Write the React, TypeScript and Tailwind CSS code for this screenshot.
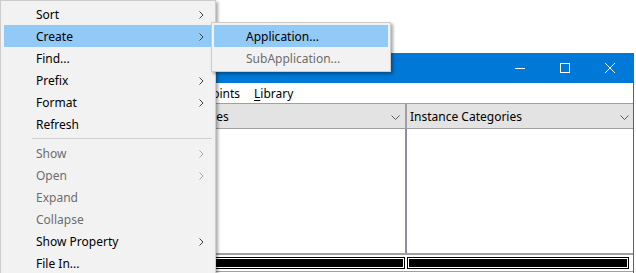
import React from "react";

type Item = { label: string; sub?: boolean; disabled?: boolean; active?: boolean } | "sep";

const mainItems: Item[] = [
  { label: "Sort", sub: true },
  { label: "Create", sub: true, active: true },
  { label: "Find..." },
  { label: "Prefix", sub: true },
  { label: "Format", sub: true },
  { label: "Refresh" },
  "sep",
  { label: "Show", sub: true, disabled: true },
  { label: "Open", sub: true, disabled: true },
  { label: "Expand", disabled: true },
  { label: "Collapse", disabled: true },
  { label: "Show Property", sub: true },
  { label: "File In..." },
];

function Arrow({ disabled }: { disabled?: boolean }) {
  return (
    <svg width="5" height="8" viewBox="0 0 5 8">
      <path d="M0.5 0.5L4 4L0.5 7.5" fill="none" stroke={disabled ? "#a6a6a6" : "#404040"} strokeWidth="1" />
    </svg>
  );
}

function Caret() {
  return (
    <svg width="9" height="5" viewBox="0 0 9 5">
      <path d="M0.5 0.5L4.5 4.5L8.5 0.5" fill="none" stroke="#5a5a5a" strokeWidth="1" />
    </svg>
  );
}

function MenuRow({ item }: { item: Exclude<Item, "sep"> }) {
  return (
    <div
      className={`flex h-[22px] items-center justify-between pl-[32px] pr-[8px] pt-px ${
        item.active ? "bg-[#91c9f7]" : ""
      } ${item.disabled ? "text-[#6d6d6d]" : "text-black"}`}
    >
      <span>{item.label}</span>
      {item.sub && <Arrow disabled={item.disabled} />}
    </div>
  );
}

function Bar({ className }: { className: string }) {
  return (
    <div className={`bg-black p-px ${className}`}>
      <div className="h-full border border-white bg-black" />
    </div>
  );
}

export default function App() {
  return (
    <div className="relative h-[273px] w-[636px] overflow-hidden bg-white font-['Segoe_UI','Noto_Sans',sans-serif] text-[12px]">
      {/* browser window behind the menus */}
      <div className="ml-[132px] mt-[53px] w-[502px] border-x border-[#0078d7]">
        <div className="flex h-[30px] justify-end bg-[#0078d7]">
          <div className="flex w-[46px] items-center justify-center pl-[4px]">
            <svg width="10" height="10" viewBox="0 0 10 10">
              <path d="M0 5.5H10" stroke="white" strokeWidth="1" />
            </svg>
          </div>
          <div className="flex w-[46px] items-center justify-center pl-[2px]">
            <svg width="10" height="10" viewBox="0 0 10 10">
              <rect x="0.5" y="0.5" width="9" height="9" fill="none" stroke="white" strokeWidth="1" />
            </svg>
          </div>
          <div className="flex w-[46px] items-center justify-center">
            <svg width="10" height="10" viewBox="0 0 10 10">
              <path d="M0 0L10 10M10 0L0 10" stroke="white" strokeWidth="1" />
            </svg>
          </div>
        </div>

        <div className="flex h-[20px] items-center bg-white pt-px">
          <div className="flex flex-1 justify-end overflow-hidden whitespace-nowrap">
            <span className="px-[7px]">File</span>
            <span className="px-[7px]">Edit</span>
            <span className="px-[7px]">Breakpoints</span>
          </div>
          <div className="w-[386px] pl-[7px]">
            <span className="underline underline-offset-2">L</span>ibrary
          </div>
        </div>

        <div className="flex h-[26px] border-y border-[#a0a0a0] bg-[#e3e3e3]">
          <div className="flex flex-1 items-center justify-between pl-[3px] pr-[5px] pt-[2px]">
            <span>Class Categories</span>
            <Caret />
          </div>
          <div className="w-[2px] bg-[#a0a0a0]" />
          <div className="flex w-[226px] items-center justify-between pl-[3px] pr-[4px] pt-[2px]">
            <span>Instance Categories</span>
            <Caret />
          </div>
        </div>

        <div className="flex h-[124px] bg-white">
          <div className="flex-1" />
          <div className="w-[2px] bg-[#8a8f99]" />
          <div className="w-[226px]" />
        </div>
        <div className="h-[2px] bg-[#a0a0a0]" />

        <div className="flex h-[16px] gap-[2px] py-[2px] pr-[4px]">
          <Bar className="flex-1" />
          <Bar className="w-[222px]" />
        </div>
        <div className="h-[1px] bg-[#a0a0a0]" />
        <div className="h-[10px] bg-white" />
      </div>

      {/* context menu */}
      <div className="absolute left-0 top-0 w-[216px] border border-[#cccccc] bg-[#f2f2f2] px-[3px] pb-[2px] pt-[2px] shadow-[2px_2px_3px_rgba(0,0,0,0.35)]">
        {mainItems.map((item, i) =>
          item === "sep" ? (
            <div key={i} className="flex h-[7px] items-center pl-[28px]">
              <div className="h-px w-full bg-[#d0d0d0]" />
            </div>
          ) : (
            <MenuRow key={i} item={item} />
          )
        )}
      </div>

      {/* Create submenu */}
      <div className="absolute left-[211px] top-[22px] w-[180px] border border-[#cccccc] bg-[#f2f2f2] p-[2px] shadow-[2px_2px_3px_rgba(0,0,0,0.35)]">
        <MenuRow item={{ label: "Application...", active: true }} />
        <MenuRow item={{ label: "SubApplication...", disabled: true }} />
      </div>
    </div>
  );
}
